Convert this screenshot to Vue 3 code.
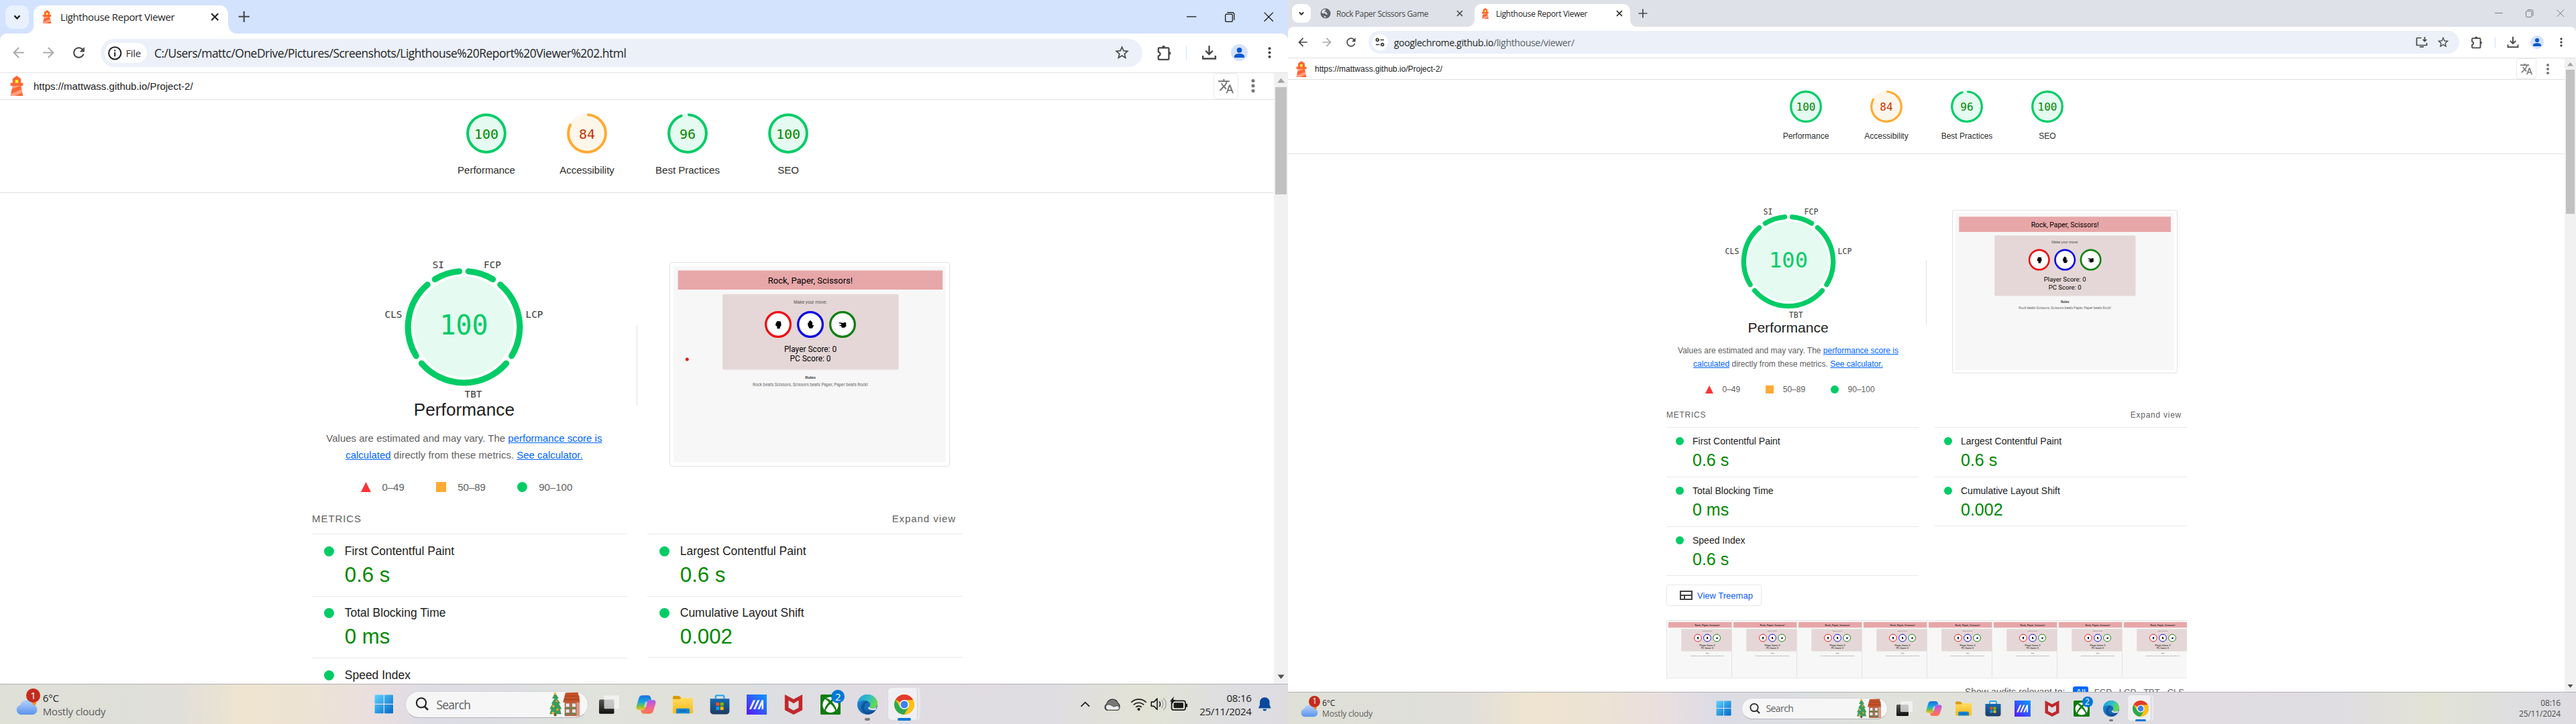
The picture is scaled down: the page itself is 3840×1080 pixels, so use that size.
<script setup>
const screens = [
  {
    key: 'left', focused: true, scale: 1.25, width: 1536, height: 864,
    tabs: [{ title: 'Lighthouse Report Viewer', active: true }],
    chip: 'File', host: 'C:/Users/mattc/OneDrive/Pictures/Screenshots/Lighthouse%20Report%20Viewer%202.html', path: '',
    canGoBack: false, install: false, thumb: 128, marker: true, tray: true, full: false,
  },
  {
    key: 'right', focused: false, scale: 1, width: 1920, height: 1080,
    tabs: [{ title: 'Rock Paper Scissors Game', active: false }, { title: 'Lighthouse Report Viewer', active: true }],
    chip: '', host: 'googlechrome.github.io', path: '/lighthouse/viewer/',
    canGoBack: true, install: true, thumb: 215, marker: false, tray: false, full: true,
  },
]

const scores = [
  { label: 'Performance', value: 100, tone: 'pass' },
  { label: 'Accessibility', value: 84, tone: 'average' },
  { label: 'Best Practices', value: 96, tone: 'pass' },
  { label: 'SEO', value: 100, tone: 'pass' },
]

const metricColumns = [
  [
    { name: 'First Contentful Paint', value: '0.6 s' },
    { name: 'Total Blocking Time', value: '0 ms' },
    { name: 'Speed Index', value: '0.6 s', last: true },
  ],
  [
    { name: 'Largest Contentful Paint', value: '0.6 s' },
    { name: 'Cumulative Layout Shift', value: '0.002' },
  ],
]

const R = 66.6
const point = (deg) => {
  const a = ((deg - 90) * Math.PI) / 180
  return `${(110 + R * Math.cos(a)).toFixed(2)} ${(95 + R * Math.sin(a)).toFixed(2)}`
}
const arcs = [[0, 36], [36, 126], [126, 234], [234, 324], [324, 360]].map(
  ([a, b]) => `M${point(a + 4.7)}A${R} ${R} 0 0 1 ${point(b - 4.7)}`,
)
const arcLabels = [
  { t: 'SI', x: 79.5, y: 25 },
  { t: 'FCP', x: 144, y: 25 },
  { t: 'LCP', x: 194, y: 83.6 },
  { t: 'TBT', x: 121.2, y: 179 },
  { t: 'CLS', x: 26, y: 83.6 },
]

const apps = ['taskview', 'copilot', 'folder', 'store', 'myasus', 'mcafee', 'xbox', 'edge', 'chrome']
const audits = ['FCP', 'LCP', 'TBT', 'CLS']
</script>

<template>
  <svg class="sprite" width="0" height="0" aria-hidden="true">
    <defs>
      <linearGradient id="g-win" x1="0" y1="0" x2="1" y2="1"><stop offset="0" stop-color="#5fd3ff" /><stop offset="1" stop-color="#0067c8" /></linearGradient>
      <linearGradient id="g-cp1" x1="0" y1="0" x2="0" y2="1"><stop offset="0" stop-color="#1a6fe0" /><stop offset=".45" stop-color="#14a8e0" /><stop offset=".75" stop-color="#7bc143" /><stop offset="1" stop-color="#f5c518" /></linearGradient>
      <linearGradient id="g-cp2" x1="0" y1="0" x2="0" y2="1"><stop offset="0" stop-color="#a45bf0" /><stop offset=".5" stop-color="#ee5fa0" /><stop offset="1" stop-color="#ff7a45" /></linearGradient>
      <linearGradient id="g-fold" x1="0" y1="0" x2="0" y2="1"><stop offset="0" stop-color="#ffdb62" /><stop offset="1" stop-color="#fcb913" /></linearGradient>
      <linearGradient id="g-store" x1="0" y1="0" x2="0" y2="1"><stop offset="0" stop-color="#1668b0" /><stop offset="1" stop-color="#213a63" /></linearGradient>
      <linearGradient id="g-asus" x1="1" y1="0" x2="0" y2="1"><stop offset="0" stop-color="#0a9bff" /><stop offset="1" stop-color="#5a16f5" /></linearGradient>
      <linearGradient id="g-edge1" x1="0" y1="0" x2="1" y2=".4"><stop offset="0" stop-color="#1b9de2" /><stop offset=".6" stop-color="#35c1c4" /><stop offset="1" stop-color="#66d94c" /></linearGradient>
      <linearGradient id="g-edge2" x1="0" y1="0" x2="1" y2="1"><stop offset="0" stop-color="#1f8fdc" /><stop offset="1" stop-color="#0c4f9c" /></linearGradient>
      <linearGradient id="g-cloud" x1="0" y1="0" x2="0" y2="1"><stop offset="0" stop-color="#b5d3fb" /><stop offset="1" stop-color="#5b93ec" /></linearGradient>
      <linearGradient id="g-tv" x1="0" y1="0" x2="0" y2="1"><stop offset="0" stop-color="#555" /><stop offset="1" stop-color="#111" /></linearGradient>
    </defs>
    <symbol id="logo" viewBox="0 0 48 48">
      <path d="m14 7 10-7 10 7v10h5v7h-5l5 24H9l5-24H9v-7h5V7Z" fill="#f63" />
      <path d="M31.561 24H14l-1.689 8.105L31.561 24ZM18.983 48H9l1.022-4.907L35.723 32.27l1.663 7.98L18.983 48Z" fill="#ffa385" />
      <path fill="#ff3" d="M20.5 10h7v7h-7z" />
    </symbol>
    <symbol id="globe" viewBox="0 0 16 16"><circle cx="8" cy="8" r="7.5" fill="#5f6368" /><path d="M4.600 2.600c1.500-.9 3-.9 3.600-.7L8 3.600l-1.300.700.300 1.500H9.500v1.900l1.500.500-.5 1.500-2 .400-.5-1.600-1.800-.900L4.400 8.600 2 6.800c.200-1.900 1.300-3.300 2.600-4.200ZM5 11.500l2.700.700 1.200 1.300-1 .8C6.500 14 5.400 13 5 11.500Z" fill="#dee1e8" /></symbol>
    <symbol id="back" viewBox="0 0 24 24"><path d="M20 11H7.830l5.590-5.590L12 4l-8 8 8 8 1.410-1.410L7.830 13H20v-2z" /></symbol>
    <symbol id="reload" viewBox="0 0 24 24"><path d="M17.650 6.350C16.200 4.900 14.210 4 12 4c-4.420 0-7.990 3.580-7.990 8s3.570 8 7.990 8c3.730 0 6.840-2.550 7.730-6h-2.080c-.82 2.330-3.040 4-5.650 4-3.310 0-6-2.690-6-6s2.690-6 6-6c1.660 0 3.140.690 4.220 1.780L13 11h7V4l-2.350 2.350z" /></symbol>
    <symbol id="star" viewBox="0 0 24 24"><path d="M22 9.240l-7.190-.62L12 2 9.190 8.630 2 9.240l5.460 4.730L5.820 21 12 17.270 18.180 21l-1.630-7.030L22 9.240zM12 15.400l-3.760 2.270 1-4.280-3.320-2.880 4.380-.38L12 6.100l1.710 4.040 4.380.380-3.320 2.880 1 4.280L12 15.400z" /></symbol>
    <symbol id="puzzle" viewBox="0 0 20 20"><path d="M3 5.200c0-.6.400-1 1-1H14.500c.6 0 1 .4 1 1v12.100c0 .6-.4 1-1 1H4c-.6 0-1-.4-1-1v-3.300c2.900-.6 2.900-4.200 0-4.800z" fill="none" stroke="currentColor" stroke-width="1.800" stroke-linejoin="round" /><path d="M7.300 4.500V3.400a1.900 1.900 0 0 1 3.800 0v1.100zM15.300 9h.9a1.800 1.800 0 0 1 0 3.600h-.9z" /></symbol>
    <symbol id="download" viewBox="0 0 20 20"><path d="M10 1.800v10M5.800 7.800 10 12l4.200-4.200M2.500 13.500v3.700h15v-3.700" fill="none" stroke="currentColor" stroke-width="1.900" /></symbol>
    <symbol id="install" viewBox="0 0 20 20"><path d="M9.500 3.500H3.500a1 1 0 0 0-1 1v10h15V11M7 16.800h6M14.500 2v6M11.800 5.800l2.700 2.700 2.700-2.700" fill="none" stroke="currentColor" stroke-width="1.700" /></symbol>
    <symbol id="dots" viewBox="0 0 24 24"><circle cx="12" cy="6" r="2" /><circle cx="12" cy="12" r="2" /><circle cx="12" cy="18" r="2" /></symbol>
    <symbol id="translate" viewBox="0 0 24 24"><path d="M12.870 15.070l-2.540-2.510.030-.03c1.740-1.940 2.980-4.170 3.710-6.530H17V4h-7V2H8v2H1v1.990h11.170C11.500 7.920 10.440 9.750 9 11.350 8.070 10.320 7.300 9.190 6.690 8h-2c.73 1.630 1.730 3.170 2.980 4.560l-5.090 5.020L4 19l5-5 3.110 3.110.760-2.040zM18.500 10h-2L12 22h2l1.120-3h4.750L21 22h2l-4.500-12zm-2.620 7l1.620-4.330L19.120 17h-3.240z" /></symbol>
    <symbol id="treemap" viewBox="3 5 19 14"><path d="M3 5v14h19V5H3zm2 2h15v4H5V7zm0 10v-4h4v4H5zm6 0v-4h9v4h-9z" /></symbol>

    <symbol id="windows" viewBox="0 0 24 24"><path d="M0.500 1.500a1 1 0 0 1 1-1h10v11h-11zM12.500.500h10a1 1 0 0 1 1 1v10h-11zM.500 12.500h11v11h-10a1 1 0 0 1-1-1zM12.500 12.500h11v10a1 1 0 0 1-1 1h-10z" fill="url(#g-win)" /></symbol>
    <symbol id="taskview" viewBox="0 0 24 24"><rect x="0" y="6" width="18" height="17" rx="1.500" fill="url(#g-tv)" /><rect x="6" y="1" width="18" height="16" rx="1.500" fill="#f7f7f7" opacity=".72" /></symbol>
    <symbol id="copilot" viewBox="0 0 24 24"><path d="M8 1h6.500c1.600 0 2.600 1 3.200 2.600l.8 2.900h-2.300c-1.400 0-2.300.8-2.700 2.200l-2 7.300c-.6 2-1.700 2.500-3.300 2.500H3.500C.8 18.500 0 16.500.6 14L3.300 4.700C4.100 2.200 5.300 1 8 1Z" fill="url(#g-cp1)" /><path d="M16 23H9.500c-1.600 0-2.600-1-3.200-2.600l-.6-1.900h2.200c1.600 0 2.700-.5 3.300-2.500l2-7.300c.4-1.400 1.300-2.200 2.700-2.200h4.700c2.600 0 3.400 1.700 2.800 4.200l-2.700 8.600C19.900 21.800 18.700 23 16 23Z" fill="url(#g-cp2)" /><path d="M11.200 8.500h2.400l-1.500 6.500H9.500z" fill="#fff" opacity=".55" /></symbol>
    <symbol id="folder" viewBox="0 0 24 24"><path d="M0 3a1.500 1.500 0 0 1 1.500-1.500h6L10 4v4H0z" fill="#d99a0b" /><path d="M0 5.500h8L10 4h12.500A1.500 1.500 0 0 1 24 5.500V21a1.500 1.500 0 0 1-1.500 1.500h-21A1.500 1.500 0 0 1 0 21z" fill="url(#g-fold)" /><path d="M4 22.500V18a1.500 1.500 0 0 1 1.500-1.500h13A1.500 1.500 0 0 1 20 18v4.500z" fill="#1287d8" /><path d="M7.500 19.500h9" stroke="#0b5ea8" stroke-width="1.200" /></symbol>
    <symbol id="store" viewBox="0 0 24 24"><path d="M7 5V2.500A1.500 1.500 0 0 1 8.500 1h7A1.500 1.500 0 0 1 17 2.500V5" fill="none" stroke="#28a8ea" stroke-width="1.800" /><path d="M.500 5h23v15a3.500 3.500 0 0 1-3.500 3.500H4A3.500 3.500 0 0 1 .500 20z" fill="url(#g-store)" /><path d="M7.500 9.500h4v4h-4z" fill="#f25022" /><path d="M12.500 9.500h4v4h-4z" fill="#7fba00" /><path d="M7.500 14.500h4v4h-4z" fill="#00a4ef" /><path d="M12.500 14.500h4v4h-4z" fill="#ffb900" /></symbol>
    <symbol id="myasus" viewBox="0 0 24 24"><path d="M0 0h24v24H0z" fill="url(#g-asus)" /><path d="M3 17.500 8 6.500h2.500l-5 11zM8 17.500l5-11h2.500l-5 11zM13 17.500l5-11h2v11h-2V12l-2.500 5.500z" fill="#fff" opacity=".92" /></symbol>
    <symbol id="mcafee" viewBox="0 0 24 24"><path d="m1.500 0 10.500 5.500L22.500 0v18.500L12 24 1.500 18.500zM6 7v8.700l6 3.200 6-3.200V7l-6 3.500z" fill="#c0282d" fill-rule="evenodd" /></symbol>
    <symbol id="xbox" viewBox="0 0 24 24"><rect width="24" height="24" rx="1.500" fill="#107c10" /><circle cx="12" cy="12.300" r="9.300" fill="#fff" /><path d="M12 7.200C9.800 5 7.300 3.800 6 4.500L5 5.400c1.500.3 3.500 2 5 3.800C7 12.500 4.500 16.500 5 19l1 .8c.8-3 3.300-6.300 6-8.600 2.700 2.300 5.200 5.600 6 8.600l1-.8c.5-2.500-2-6.500-5-9.800 1.500-1.800 3.500-3.500 5-3.800l-1-.9c-1.300-.7-3.800.5-6 2.700z" fill="#107c10" /></symbol>
    <symbol id="edge" viewBox="0 0 24 24"><circle cx="12" cy="12" r="12" fill="url(#g-edge2)" /><path d="M.3 9.800C1.500 4 6.300 0 12 0c7 0 12 5 12 10.500 0 3.700-2.800 6-6 6-2.600 0-4-.9-3.700-1.900.3-.8 1-1.300 1-2.900C15.300 9 12 7 8.600 7 4.500 7 1 8.500.3 9.800Z" fill="url(#g-edge1)" /><path d="M8.300 17c-.7-4 2-7.500 4.700-7.700-.8-.9-2.500-1.300-4-.8C5 9.900 3.500 14 5 17.500c1.300 3.300 4.300 5.800 7.500 6.400 3.600-.1 7-1.900 9.200-5.200-5.400 2.800-12.400 3-13.400-1.700Z" fill="#123f7d" opacity=".55" /><path d="M23 14.500c-1 1.300-3 2-5 2-2.600 0-4-.9-3.700-1.900l-1.800 1.200c1 2.800 5.500 3.400 9.600 2.300z" fill="#e2e3e6" /></symbol>
    <symbol id="chrome" viewBox="0 0 24 24"><circle cx="12" cy="12" r="12" fill="#fbc116" /><path d="M12 12 1.610 6A12 12 0 0 1 22.390 6z" fill="#e33b2e" /><path d="M1.610 6A12 12 0 0 0 12 24l5.200-9L12 12 6.800 15z" fill="#2da94f" /><path d="M12 6.500h10.650A12 12 0 0 1 12 24l5-9z" fill="#fbc116" /><circle cx="12" cy="12" r="5.600" fill="#fff" /><circle cx="12" cy="12" r="4.400" fill="#3c7ff0" /></symbol>
    <symbol id="festive" viewBox="0 0 36 30">
      <path d="M6.500 1 11 8H9l4 6h-2l3.500 6.500h-2l1.500 6H0l2-6H0L3.500 14H2l4-6H3z" fill="#3b9b5c" /><path d="M5.300 26h2.800v3H5.300z" fill="#7b4b2a" />
      <circle cx="6.500" cy="2" r="1.500" fill="#f6b73c" /><circle cx="8.500" cy="11" r="1.300" fill="#f29b2e" /><circle cx="4.500" cy="17" r="1.300" fill="#f6c044" /><circle cx="9.500" cy="21" r="1.500" fill="#f29b2e" /><circle cx="4" cy="25" r="1.500" fill="#f6b73c" />
      <path d="M18 12h16v17H18z" fill="#b5674c" /><path d="M32 5h4v24h-4z" fill="#d79a86" /><path d="m19 1 15-.5 2 12H16z" fill="#c4532a" /><path d="M17 9h18.500M18 5h17" stroke="#9d3d1c" stroke-width=".8" />
      <path d="M19.500 14h4v4h-4zM27 14h4v4h-4zM19.500 21h4v4h-4zM27 21h4v4h-4z" fill="#dcecf7" /><path d="M18 20.500c2-2 4-2 6 0 2-2 5-2 8 0M18 27c3-2 5-2 7 0 2-2 4-2 7 0" stroke="#4a8f4f" stroke-width="1.300" fill="none" />
    </symbol>
    <symbol id="weather" viewBox="0 0 24 24"><circle cx="18.500" cy="8.500" r="3.500" fill="#f58a1f" /><path d="M5.500 21.500a5.500 5.500 0 0 1-.8-10.800 7.300 7.300 0 0 1 14-.4A5.700 5.700 0 0 1 18.500 21.500z" fill="url(#g-cloud)" /></symbol>
    <symbol id="onedrive" viewBox="0 0 18 18"><path d="M4 15.500a3.500 3.500 0 0 1-1.700-6.500C3 5.500 6 3 9.300 3c3 0 5 1.700 6 4.500 1.400.8 2 2.300 2 4 0 2.500-1.500 4-3.800 4z" fill="#777" stroke="#222" stroke-width=".8" /><path d="M4 15.300a3.200 3.200 0 0 1 .5-6.300c2 0 4.500 1.500 6 2.500l4-1c2 .8 2.600 2 2.300 3-.4 1.200-1.500 1.800-3.300 1.800z" fill="#ececec" stroke="#444" stroke-width=".6" /></symbol>
    <symbol id="wifi" viewBox="0 0 20 18"><path d="M1 7c5-5 13-5 18 0M3.800 10c3.500-3.500 8.900-3.500 12.400 0M6.500 12.800c2-2 5-2 7 0" fill="none" stroke="#1b1b1b" stroke-width="1.300" /><circle cx="10" cy="15.200" r="1.700" fill="#1b1b1b" /></symbol>
    <symbol id="volume" viewBox="0 0 20 18"><path d="M1 6.500h3L8 2.500v13l-4-4H1z" fill="none" stroke="#1b1b1b" stroke-width="1.300" stroke-linejoin="round" /><path d="M10.500 6c1.500 1.500 1.500 4.500 0 6" stroke="#1b1b1b" stroke-width="1.300" fill="none" /><path d="M13 4c2.500 2.500 2.500 7.500 0 10M15.500 2c4 4 4 10 0 14" stroke="#a5a5a5" stroke-width="1.200" fill="none" /></symbol>
    <symbol id="battery" viewBox="0 0 22 18"><rect x="2" y="5" width="16.500" height="11" rx="2.500" fill="none" stroke="#1b1b1b" stroke-width="1.400" /><rect x="4.500" y="7.300" width="11.500" height="6.400" rx="1" fill="#1b1b1b" /><path d="M20 8.500v4" stroke="#1b1b1b" stroke-width="1.800" /><path d="M4.500 0 0 6h2.500L1.500 10 6.500 4H4z" fill="#1b1b1b" /></symbol>
    <symbol id="bell" viewBox="0 0 18 18"><path d="M9 1a5.800 5.800 0 0 0-5.800 5.800V10L1.500 14h15l-1.700-4V6.800A5.800 5.800 0 0 0 9 1Z" fill="#0a489b" /><path d="M6.800 15h4.400a2.200 2.200 0 0 1-4.400 0Z" fill="#0a489b" /></symbol>
  </svg>

  <div class="desktop">
    <section
      v-for="s in screens" :key="s.key" class="screen" :class="{ focused: s.focused }"
      :style="{ zoom: s.scale, width: s.width + 'px', height: s.height + 'px' }"
    >
      <header class="tabstrip">
        <span class="tab-search"><svg viewBox="0 0 12 12" width="12" height="12"><path d="m2.800 4.300 3.200 3.300 3.200-3.300" fill="none" stroke="currentColor" stroke-width="1.900" /></svg></span>
        <div v-for="t in s.tabs" :key="t.title" class="tab" :class="{ active: t.active }">
          <svg width="16" height="16" class="fav"><use :href="t.active ? '#logo' : '#globe'" /></svg>
          <span class="tab-title">{{ t.title }}</span>
          <svg class="tab-close" viewBox="0 0 10 10" width="10" height="10"><path d="m1 1 8 8M9 1 1 9" stroke="currentColor" stroke-width="1.600" /></svg>
        </div>
        <svg class="new-tab" viewBox="0 0 14 14" width="14" height="14"><path d="M7 .500v13M.500 7h13" stroke="currentColor" stroke-width="1.700" /></svg>
        <div class="window-buttons">
          <svg viewBox="0 0 12 12" width="12" height="12"><path d="M0 5.500h11.500" stroke="currentColor" /></svg>
          <svg viewBox="0 0 12 12" width="12" height="12"><path d="M.500 4a1.500 1.500 0 0 1 1.500-1.500h5.500A1.500 1.500 0 0 1 9 4v6a1.500 1.500 0 0 1-1.500 1.500H2A1.500 1.500 0 0 1 .500 10zM2.500.500h6a2.500 2.500 0 0 1 2.500 2.500v6.500" fill="none" stroke="currentColor" /></svg>
          <svg viewBox="0 0 12 12" width="12" height="12"><path d="m.500.500 10.500 10.500M11 .500.500 11" stroke="currentColor" /></svg>
        </div>
      </header>

      <div class="toolbar">
        <svg class="nav" :class="{ off: !s.canGoBack }" width="20" height="20"><use href="#back" /></svg>
        <svg class="nav off flip" width="20" height="20"><use href="#back" /></svg>
        <svg class="nav" width="20" height="20"><use href="#reload" /></svg>
        <div class="omnibox">
          <span v-if="s.chip" class="chip">
            <svg viewBox="0 0 18 18" width="18" height="18"><circle cx="9" cy="9" r="7.300" fill="none" stroke="#1f1f1f" stroke-width="1.600" /><path d="M9 8v5M9 5v1.700" stroke="#1f1f1f" stroke-width="1.600" /></svg>
            {{ s.chip }}
          </span>
          <span v-else class="site-info"><svg viewBox="0 0 14 14" width="14" height="14"><g fill="none" stroke="#333" stroke-width="1.700"><circle cx="3.300" cy="3.500" r="1.900" /><circle cx="10.700" cy="10.500" r="1.900" /><path d="M7.500 3.500H13M1 10.500h5.500" /></g></svg></span>
          <span class="url" :class="{ long: s.chip }">{{ s.host }}<i>{{ s.path }}</i></span>
          <svg v-if="s.install" class="ob-icon" width="20" height="20"><use href="#install" /></svg>
          <svg class="ob-icon" width="20" height="20"><use href="#star" /></svg>
        </div>
        <svg class="puzzle" width="20" height="20"><use href="#puzzle" /></svg>
        <span class="bar-sep"></span>
        <svg class="dl" width="20" height="20"><use href="#download" /></svg>
        <span class="avatar"><svg viewBox="0 0 20 20" width="20" height="20"><circle cx="10" cy="7" r="3.100" /><path d="M4 16v-1.500C4 12 7 11.200 10 11.200s6 .8 6 3.300V16z" /></svg></span>
        <svg class="menu" width="20" height="20"><use href="#dots" /></svg>
      </div>

      <div class="viewport">
        <main class="page">
          <div class="topbar">
            <svg width="24" height="24"><use href="#logo" /></svg>
            <span class="topbar-url">https://mattwass.github.io/Project-2/</span>
            <span class="translate"><svg width="20" height="20"><use href="#translate" /></svg></span>
            <svg class="topbar-menu" width="24" height="24"><use href="#dots" /></svg>
          </div>

          <div class="scores">
            <div v-for="g in scores" :key="g.label" class="score" :class="g.tone">
              <svg viewBox="0 0 48 48" width="48" height="48">
                <circle class="disc" cx="24" cy="24" r="23.500" />
                <circle v-if="g.value === 100" class="ring" cx="24" cy="24" r="22.300" />
                <circle v-else class="ring" cx="24" cy="24" r="22.300" pathLength="100" transform="rotate(-86 24 24)" :stroke-dasharray="`${g.value - 2.200} 100`" />
                <text x="24" y="30">{{ g.value }}</text>
              </svg>
              <span>{{ g.label }}</span>
            </div>
          </div>

          <div class="report">
            <div class="category">
              <div class="summary">
                <svg class="gauge" viewBox="0 0 220 181" width="220" height="181">
                  <circle cx="110" cy="95" r="59.700" fill="#e5faf0" />
                  <path v-for="d in arcs" :key="d" :d="d" />
                  <text class="big" x="110" y="103.800">100</text>
                  <text v-for="l in arcLabels" :key="l.t" :x="l.x" :y="l.y">{{ l.t }}</text>
                </svg>
                <h1>Performance</h1>
                <p class="note">Values are estimated and may vary. The <a>performance score is</a><br><a>calculated</a> directly from these metrics. <a>See calculator.</a></p>
                <div class="legend">
                  <span><svg viewBox="0 0 12 12" width="12" height="12"><path d="M6 0l6 12H0z" fill="#f33" /></svg>0–49</span>
                  <span><svg viewBox="0 0 12 12" width="12" height="12"><path d="M0 0h12v12H0z" fill="#fa3" /></svg>50–89</span>
                  <span><svg viewBox="0 0 12 12" width="12" height="12"><circle cx="6" cy="6" r="6" fill="#0c6" /></svg>90–100</span>
                </div>
              </div>
              <div class="divider"></div>
              <div class="final-shot">
                <svg viewBox="0 0 325.500 234" width="325.5" height="234">
                  <g :id="'shot-' + s.key" class="shot">
                    <path d="M0 0h325.500v234H0z" fill="#f7f7f7" />
                    <path d="M5.300 5.200h315.700v22.800H5.300z" fill="#e7a7a9" />
                    <rect x="58.400" y="33.800" width="209.900" height="90" rx="2" fill="#dccfcf" opacity=".6" />
                    <rect x="58.400" y="33.300" width="209.900" height="89.400" rx="1.500" fill="#e5d7d7" />
                    <text x="163.200" y="20.600" font-size="10.400">Rock, Paper, Scissors!</text>
                    <text x="163.200" y="44.600" font-size="5.300" fill="#555">Make your move:</text>
                    <g fill="#fff" stroke-width="2.600"><circle cx="124.800" cy="69.600" r="14.700" stroke="#ee0d12" /><circle cx="163.200" cy="69.600" r="14.700" stroke="#0a05e0" /><circle cx="201.600" cy="69.600" r="14.700" stroke="#0d800f" /></g>
                    <path d="M122 68.500l1.500-3 4.500.500.500 5-1.500 1.500v2h-3.500v-2.500l-2-1.500z" />
                    <path d="M160.200 70.500v-3h1.200v-2h1v-.8h1.200v.8h1v1h1v4.500l1-1 .8.700-2 3.500h-3.500z" />
                    <path d="M197.500 67.200l4.500.5 3-.8.800 1v4l-2 1.500h-3.300l-.5-2h-2v-1h2v-1.500l-2.700-.7z" />
                    <text x="163.200" y="102.300" font-size="9.500">Player Score: 0</text>
                    <text x="163.200" y="113.500" font-size="9.500">PC Score: 0</text>
                    <text x="163.200" y="134.300" font-size="5" font-weight="700" fill="#444">Rules</text>
                    <text x="163.200" y="143" font-size="5.050" fill="#666">Rock beats Scissors, Scissors beats Paper, Paper beats Rock!</text>
                  </g>
                  <circle v-if="s.marker" cx="16.200" cy="111.200" r="2" fill="#f01414" />
                </svg>
              </div>
            </div>

            <div class="metrics-head"><span>METRICS</span><span class="expand">Expand view</span></div>
            <div class="metrics">
              <div v-for="(col, i) in metricColumns" :key="i" class="metric-col">
                <div v-for="m in col" :key="m.name" class="metric">
                  <i></i><div><b>{{ m.name }}</b><strong v-if="s.full || !m.last">{{ m.value }}</strong></div>
                </div>
              </div>
            </div>

            <template v-if="s.full">
              <button class="treemap"><svg width="19" height="14"><use href="#treemap" /></svg>View Treemap</button>

              <div class="filmstrip">
                <svg v-for="n in 8" :key="n" viewBox="0 0 261 234" width="96" height="86" preserveAspectRatio="xMinYMin slice"><use :href="'#shot-' + s.key" /></svg>
              </div>

              <div class="audit-filter"><span>Show audits relevant to:</span><em>All</em><label v-for="a in audits" :key="a">{{ a }}</label></div>
            </template>
          </div>
        </main>
        <aside class="scrollbar">
          <svg viewBox="0 0 17 17" width="17" height="17"><path d="M8.500 6 13 11.500H4z" fill="#a3a3a3" /></svg>
          <div class="thumb" :style="{ height: s.thumb + 'px' }"></div>
          <svg class="down" viewBox="0 0 17 17" width="17" height="17"><path d="M8.500 11 12.500 6h-8z" fill="#505050" /></svg>
        </aside>
      </div>

      <footer class="taskbar">
        <div class="weather">
          <span class="weather-icon"><svg width="26" height="26"><use href="#weather" /></svg><b>1</b></span>
          <p>6°C<br><i>Mostly cloudy</i></p>
        </div>
        <div class="dock">
          <span class="app"><svg width="23" height="23"><use href="#windows" /></svg></span>
          <div class="search">
            <svg viewBox="0 0 18 18" width="18" height="18"><circle cx="8" cy="7.500" r="5.700" fill="none" stroke="#222" stroke-width="1.700" /><path d="m12 12 4 4" stroke="#222" stroke-width="2" /></svg>
            <span>Search</span>
            <svg class="festive" width="38" height="30"><use href="#festive" /></svg>
          </div>
          <span v-for="a in apps" :key="a" class="app" :class="a">
            <svg width="24" height="24"><use :href="'#' + a" /></svg>
            <b v-if="a === 'xbox'">2</b>
          </span>
        </div>
        <div class="tray">
          <template v-if="s.tray">
            <svg class="chev" viewBox="0 0 14 14" width="14" height="14"><path d="m2 9.500 5-5 5 5" fill="none" stroke="#1b1b1b" stroke-width="1.400" /></svg>
            <svg class="cloud" width="21" height="19"><use href="#onedrive" /></svg>
            <svg class="wifi" width="20" height="18"><use href="#wifi" /></svg>
            <svg class="vol" width="20" height="18"><use href="#volume" /></svg>
            <svg class="batt" width="22" height="18"><use href="#battery" /></svg>
          </template>
          <p class="clock">08:16<br>25/11/2024</p>
          <svg v-if="s.tray" class="bell" width="18" height="18"><use href="#bell" /></svg>
        </div>
      </footer>
    </section>
  </div>
</template>

<style>
html, body { margin: 0; background: #fff; overflow: hidden; }
</style>

<style scoped>
.sprite { position: absolute; }
.desktop { display: flex; width: 3840px; height: 1080px; overflow: hidden; }
.screen { flex: none; display: flex; flex-direction: column; overflow: hidden; background: #fff; color: #1f1f1f; font-family: "Liberation Sans", Arial, sans-serif; --strip: #dee1e8; --ctl: #777b80; }
.screen.focused { --strip: #d3e2fd; --ctl: #111; }
.screen svg { display: block; flex: none; }
i, em { font-style: normal; }

.tabstrip { flex: none; height: 40px; display: flex; align-items: center; background: var(--strip); font: 12px "Open Sans", sans-serif; letter-spacing: -.32px; }
.tab-search { width: 28px; height: 28px; margin: 0 6px; border-radius: 9px; background: #fff; display: flex; align-items: center; justify-content: center; }
.focused .tab-search { background: #e9f0fe; }
.tab { position: relative; box-sizing: border-box; width: 238px; height: 34px; margin-top: 6px; padding: 0 11px 6px 8px; display: flex; align-items: center; color: #474747; }
.tab.active { width: 232px; background: #fff; border-radius: 10px 10px 0 0; color: #1f1f1f; }
.tab.active::before, .tab.active::after { content: ""; position: absolute; bottom: 0; width: 10px; height: 10px; }
.tab.active::before { left: -10px; background: radial-gradient(circle at 0 0, transparent 9.5px, #fff 10px); }
.tab.active::after { right: -10px; background: radial-gradient(circle at 100% 0, transparent 9.5px, #fff 10px); }
.fav { margin-right: 8px; }
.tab-title { flex: 1; white-space: nowrap; }
.tab:not(.active) .tab-title { letter-spacing: -.4px; }
.tab:not(.active) .tab-close { margin-right: 6px; }
.new-tab { margin-left: 12px; color: #474747; }
.window-buttons { margin: 0 17px 0 auto; display: flex; gap: 34px; color: var(--ctl); }

.toolbar { flex: none; height: 47px; box-sizing: border-box; padding: 0 12px; border-bottom: 1px solid #dfe1e5; display: flex; align-items: center; background: var(--strip); position: relative; isolation: isolate; color: #474747; fill: currentColor; }
.toolbar::before { content: ""; position: absolute; inset: 0; background: #fff; border-radius: 8px 8px 0 0; z-index: -1; }
.nav { margin-right: 16px; }
.nav.off { color: #aaacae; }
.flip { transform: scaleX(-1); }
.omnibox { flex: 1; height: 34px; margin-right: 16px; box-sizing: border-box; padding: 0 14px 0 5px; border-radius: 17px; background: #ebf0f9; display: flex; align-items: center; font-family: "Open Sans", sans-serif; }
.site-info { width: 24px; height: 24px; border-radius: 50%; background: #fff; display: flex; align-items: center; justify-content: center; }
.chip { width: 50px; height: 24px; border-radius: 12px; background: #fff; display: flex; align-items: center; box-sizing: border-box; padding-left: 3px; gap: 4px; font-size: 12px; letter-spacing: -.3px; color: #333; font-weight: 500; }
.url { flex: 1; margin-left: 9px; font-size: 14px; letter-spacing: -.31px; color: #1f1f1f; white-space: nowrap; }
.url.long { letter-spacing: -.415px; }
.url i { color: #5d6065; }
.ob-icon { margin-left: 12px; }
.bar-sep { width: 1px; height: 16px; margin: 0 16.5px; background: #cfe0fb; }
.avatar { margin: 0 16px; width: 20px; height: 20px; border-radius: 50%; background: #d3e2fd; fill: #0b57d0; }

.viewport { flex: 1; min-height: 0; display: flex; }
.page { flex: 1; min-width: 0; overflow: hidden; }
.scrollbar { width: 17px; background: #f1f1f1; display: flex; flex-direction: column; }
.thumb { margin: 0 2px; background: #c1c1c1; }
.down { margin-top: auto; }

.topbar { height: 32px; box-sizing: border-box; border-bottom: 1px solid #e0e0e0; padding: 0 13px 0 8px; display: flex; align-items: center; font-size: 12px; color: #212121; }
.topbar-url { margin-left: 8px; flex: 1; }
.translate { width: 30px; height: 31px; box-sizing: border-box; border: 1px solid #ebebeb; border-radius: 3px; display: flex; align-items: center; justify-content: center; fill: #757575; margin-right: 5px; }
.topbar-menu { fill: #757575; }
.scores { height: 111px; box-sizing: border-box; border-bottom: 1px solid #e0e0e0; padding: 16px 0 0 1px; display: flex; justify-content: center; }
.score { width: 120px; display: flex; flex-direction: column; align-items: center; font-size: 12px; line-height: 16px; gap: 12px; color: #2c2c2c; }
.ring { fill: none; stroke-width: 3.2; stroke: #0c6; stroke-linecap: round; }
.disc { fill: #e5faf0; }
.score text { font: 16px "DejaVu Sans Mono", monospace; text-anchor: middle; fill: #080; }
.average .ring { stroke: #fa3; }
.average .disc { fill: #fff6ea; }
.score.average text { fill: #c33300; }

.report { width: 776px; margin: 0 auto; padding-left: 1px; }
.category { display: flex; padding-top: 65px; align-items: flex-start; }
.summary { width: 363px; display: flex; flex-direction: column; align-items: center; }
.gauge { overflow: visible; }
.gauge path { fill: none; stroke: #0c6; stroke-width: 7.3; stroke-linecap: round; }
.gauge text { font: 11.5px "DejaVu Sans Mono", monospace; text-anchor: middle; fill: #383838; }
.gauge text.big { font-size: 32px; fill: #0c6; }
h1 { margin: 1px 0 0; font-size: 21px; line-height: 24px; font-weight: 400; color: #212121; }
.note { margin: 12px 0 0; font-size: 12px; line-height: 20px; color: #616161; text-align: center; white-space: nowrap; }
.note a { color: #06f; text-decoration: underline; }
.legend { align-self: flex-start; margin: 18px 0 0 58px; height: 20px; display: flex; gap: 38px; font-size: 12px; color: #616161; }
.legend span { display: flex; align-items: center; gap: 13.5px; }
.divider { width: 1px; height: 96px; margin: 93px 38px 0 24px; background: #e0e0e0; }
.final-shot { margin-top: 18px; padding: 4px; border: 1px solid #e0e0e0; border-radius: 3px; }
.shot text { font-family: Roboto, sans-serif; text-anchor: middle; }

.metrics-head { height: 20px; margin: 18px 0 8px; display: flex; justify-content: space-between; align-items: center; font-size: 12px; letter-spacing: .75px; color: #616161; }
.expand { padding-right: 8px; }
.metrics { display: grid; grid-template-columns: 1fr 1fr; column-gap: 24px; align-items: start; }
.metric-col { border-bottom: 1px solid #e8e8e8; }
.metric { height: 74px; box-sizing: border-box; border-top: 1px solid #e8e8e8; display: flex; padding: 10px 0 0 14px; }
.metric:last-child { height: 73px; }
.metric > i { width: 12px; height: 12px; margin: 4px 13px 0 0; border-radius: 50%; background: #0c6; }
.metric b { display: block; font-weight: 400; font-size: 14px; line-height: 20px; color: #212121; }
.metric strong { display: block; font-weight: 400; font-size: 25px; line-height: 36px; color: #080; }
.treemap { margin: 13px 0 0; width: 142px; height: 32px; padding: 0 0 0 19px; display: flex; align-items: center; gap: 7px; border: 1px solid #e8e8e8; border-radius: 3px; background: #fff; font: 13px "Liberation Sans", Arial, sans-serif; color: #0b5cf0; fill: #424242; white-space: nowrap; }
.filmstrip { margin-top: 21px; height: 87px; box-sizing: border-box; border: solid #e8e8e8; border-width: 1px 0 1px 1px; display: flex; overflow: hidden; }
.filmstrip svg { border-right: 1px solid #e2e2e2; }
.audit-filter { margin-top: 12px; display: flex; justify-content: flex-end; align-items: center; padding-right: 4px; font-size: 13px; color: #616161; height: 16px; }
.audit-filter span { font-size: 14px; }
.audit-filter em { margin: 0 9px 0 12px; padding: 0 4px; height: 17px; line-height: 17px; border-radius: 3px; background: #06f; color: #fff; font-size: 13px; }
.audit-filter label + label { margin-left: 11px; }

.taskbar { flex: none; height: 48px; box-sizing: border-box; border-top: 1px solid #b0b0b0; display: grid; grid-template-columns: 1fr 665px 1fr; align-items: center; font: 12px/16px "Open Sans", sans-serif; color: #222;
  background: linear-gradient(90deg, #dfe0d6 0, #dfdfd9 10%, #e1dfda 14%, #efe4cf 19%, #ece2d6 25%, #ebdfde 28.5%, #dddce5 33%, #dcdde2 38%, #e0e2dc 46%, #e0e1d9 51%, #dddee2 60%, #e0dce2 68%, #dfdde1 82%, #e2e3d5 89%, #dedee0 95%, #dedce1 100%); }
.weather { display: flex; align-items: center; padding-left: 19px; letter-spacing: -.15px; }
.weather p, .clock { margin: 0; }
.weather i { color: #5c5c5c; }
.weather-icon { position: relative; margin-right: 6px; }
.weather-icon svg { margin-top: 4px; }
.weather-icon b { position: absolute; left: 12px; top: -4px; width: 17px; height: 17px; border-radius: 50%; background: #c42b1c; color: #fff; font-weight: 400; text-align: center; }
.dock { display: flex; align-items: center; }
.app { position: relative; width: 44px; height: 47px; display: flex; align-items: center; justify-content: center; }
.app b { position: absolute; left: 23px; top: 6px; width: 16px; height: 16px; border-radius: 50%; background: #0078d4; color: #fff; font-weight: 400; text-align: center; }
.search { width: 218px; height: 32px; margin: 0 3px 0 4px; box-sizing: border-box; border: 1px solid #d4d4d8; border-bottom-color: #b4b4b8; border-radius: 16px; background: #f6f6f7; display: flex; align-items: center; padding: 0 8px 0 10px; gap: 8px; font-size: 14px; letter-spacing: -.6px; color: #5d5d5d; }
.festive { margin-left: auto; }
.app.chrome { isolation: isolate; }
.app.chrome::before { content: ""; position: absolute; z-index: -1; left: 3px; top: 4px; width: 34px; height: 38px; border-radius: 4px; background: #f0eff2; border-right: 1px solid #d0d0d4; box-shadow: 3px 0 0 #e9e8ec, 0 0 0 .5px #d6d6da; }
.app.chrome::after, .app.edge::after { content: ""; position: absolute; top: 40px; height: 3px; border-radius: 2px; }
.app.chrome::after { left: 14px; width: 16px; background: #0078d4; }
.app.edge::after { left: 19px; width: 6px; background: #7d7d7d; }
.tray { display: flex; align-items: center; justify-content: flex-end; padding-right: 23px; }
.focused .tray { padding-right: 19px; }
.clock { text-align: right; letter-spacing: -.17px; color: #4c4c4c; }
.focused .clock { color: #1b1b1b; width: 62px; }
.chev { margin-right: 15px; }
.cloud { margin-right: 11px; }
.wifi { margin-right: 4px; }
.vol { margin-right: 3px; }
.batt { margin-right: 13.5px; }
.bell { margin-left: 6.5px; }
</style>
